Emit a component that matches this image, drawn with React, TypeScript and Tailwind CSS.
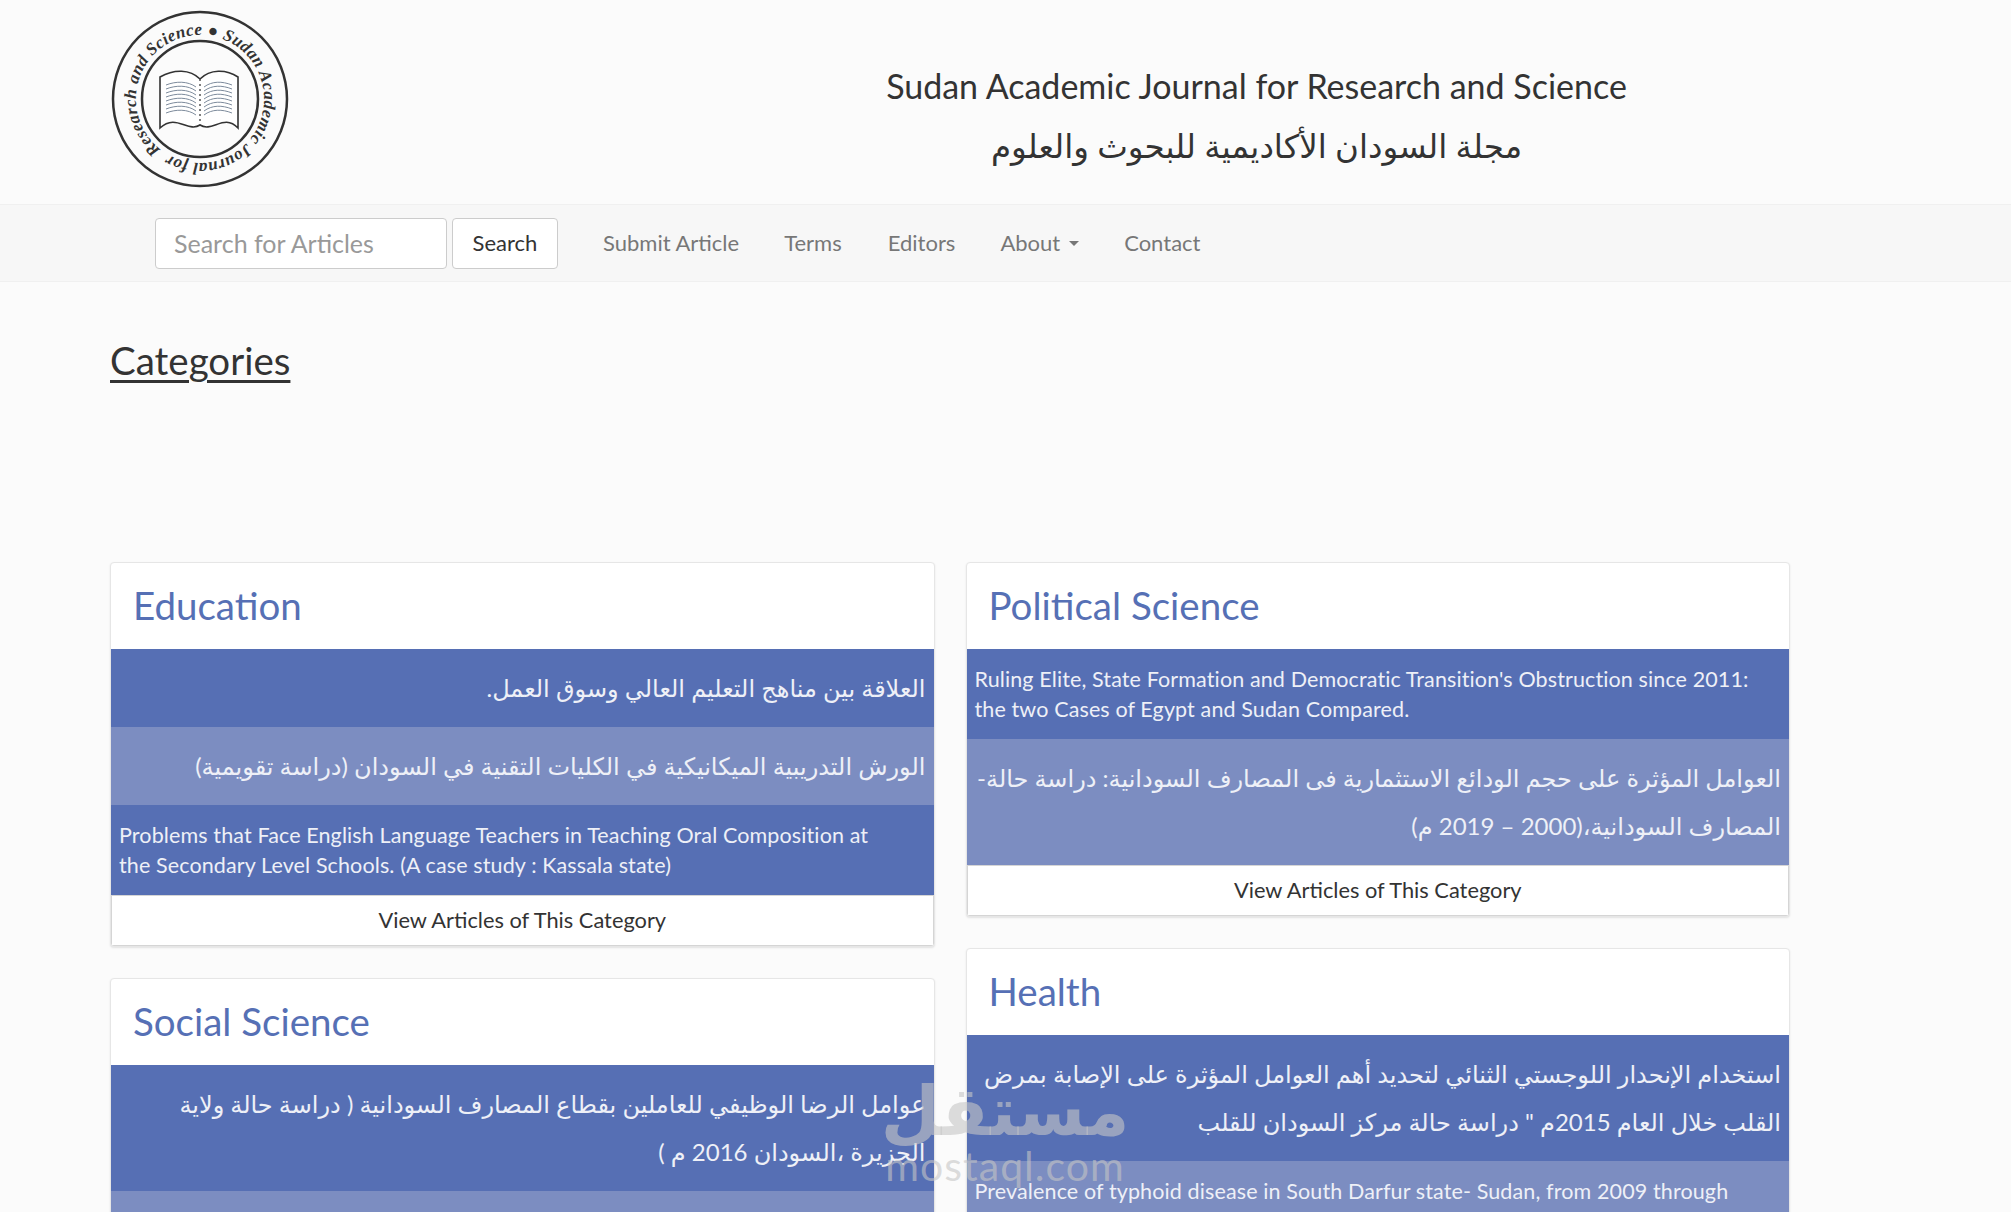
const font = "font-['Lato','DejaVu_Sans',sans-serif]";

type Item = { text: string; rtl?: boolean };
type Category = { title: string; items: Item[]; footer?: boolean };

const left: Category[] = [
  {
    title: 'Education',
    footer: true,
    items: [
      { text: 'العلاقة بين مناهج التعليم العالي وسوق العمل.', rtl: true },
      { text: 'الورش التدريبية الميكانيكية في الكليات التقنية في السودان (دراسة تقويمية)', rtl: true },
      { text: 'Problems that Face English Language Teachers in Teaching Oral Composition at the Secondary Level Schools. (A case study : Kassala state)' },
    ],
  },
  {
    title: 'Social Science',
    items: [
      { text: 'عوامل الرضا الوظيفي للعاملين بقطاع المصارف السودانية ( دراسة حالة ولاية الجزيرة ،السودان 2016 م )', rtl: true },
      { text: '\u00a0', rtl: true },
    ],
  },
];

const right: Category[] = [
  {
    title: 'Political Science',
    footer: true,
    items: [
      { text: "Ruling Elite, State Formation and Democratic Transition's Obstruction since 2011: the two Cases of Egypt and Sudan Compared." },
      { text: 'العوامل المؤثرة على حجم الودائع الاستثمارية فى المصارف السودانية: دراسة حالة- المصارف السودانية،(2000 – 2019 م)', rtl: true },
    ],
  },
  {
    title: 'Health',
    items: [
      { text: 'استخدام الإنحدار اللوجستي الثنائي لتحديد أهم العوامل المؤثرة على الإصابة بمرض القلب خلال العام 2015م " دراسة حالة مركز السودان للقلب', rtl: true },
      { text: 'Prevalence of typhoid disease in South Darfur state- Sudan, from 2009 through 2014' },
    ],
  },
];

function Logo() {
  return (
    <svg viewBox="0 0 180 180" className="w-[180px] h-[180px] shrink-0 mb-[6px]">
      <defs>
        <path id="ring" d="M90 90 m-64 0 a64 64 0 1 1 128 0 a64 64 0 1 1 -128 0" />
      </defs>
      <circle cx="90" cy="90" r="87" fill="none" stroke="#333" strokeWidth="2.5" />
      <circle cx="90" cy="90" r="58" fill="none" stroke="#333" strokeWidth="2.5" />
      <g transform="rotate(-52 90 90)">
        <text fontFamily="'Liberation Serif',serif" fontStyle="italic" fontWeight="700" fontSize="17" fill="#333">
          <textPath href="#ring" startOffset="0" textLength="392" lengthAdjust="spacing">Research and Science ● Sudan Academic Journal for</textPath>
        </text>
      </g>
      <path d="M50 68 C64 60 80 60 90 70 C100 60 116 60 128 68 L128 119 C114 104 102 124 90 116 C78 124 66 104 50 119 Z" fill="#fff" stroke="#333" strokeWidth="1.6" />
      <path d="M90 70 V116" stroke="#555" strokeWidth="1.5" strokeDasharray="2 3" />
      {[0, 1, 2, 3, 4, 5, 6, 7].map((i) => (
        <g key={i} fill="none" stroke="#7d8b9c" strokeWidth="1">
          <path d={`M56 ${76 + i * 4} C66 ${72 + i * 4} 78 ${72 + i * 4} 86 ${78 + i * 4}`} />
          <path d={`M94 ${78 + i * 4} C102 ${72 + i * 4} 112 ${72 + i * 4} 122 ${76 + i * 4}`} />
        </g>
      ))}
    </svg>
  );
}

function CategoryCard({ category }: { category: Category }) {
  return (
    <div className="bg-white border border-[#e6e6e6] rounded-[4px] shadow-[0_1px_2px_rgba(0,0,0,0.1)] overflow-hidden">
      <h3 className="h-[86px] px-[22px] flex items-center text-[38.5px] text-[#5670b5]">{category.title}</h3>
      {category.items.map((item, i) => (
        <div
          key={i}
          dir={item.rtl ? 'rtl' : 'ltr'}
          className={
            (i % 2 === 0 ? 'bg-[#566fb4] ' : 'bg-[#7c8dc1] ') +
            (item.rtl
              ? 'px-2 py-[15px] text-[24px] leading-[48px] text-[#eef0f7]'
              : 'pl-2 pr-[33px] py-[15px] text-[21.5px] leading-[30px] text-[#eef0f7] tracking-[0.12px]')
          }
        >
          {item.text}
        </div>
      ))}
      {category.footer && (
        <div className="h-[51px] flex items-center justify-center text-[21.8px] text-[#333] border border-[#d5d5d5] bg-white">
          View Articles of This Category
        </div>
      )}
    </div>
  );
}

export default function App() {
  return (
    <div className={`relative h-[1212px] overflow-hidden bg-[#fbfbfb] text-[#333] ${font}`}>
      <header className="h-[204px] pl-[110px] flex items-center">
        <Logo />
        <div className="flex-1 mt-[28px] pl-[308px] pr-[96px] text-center">
          <h1 className="text-[34px] leading-[60px] text-[#333]">Sudan Academic Journal for Research and Science</h1>
          <h2 dir="rtl" className="text-[32.5px] leading-[60px] text-[#333]">مجلة السودان الأكاديمية للبحوث والعلوم</h2>
        </div>
      </header>

      <nav className="h-[78px] bg-[#f7f7f7] border-y border-[#f0f0f0] pl-[155px] pb-[2px] flex items-center text-[22px] text-[#777]">
        <input
          placeholder="Search for Articles"
          className="w-[292px] h-[51px] px-[18px] mt-[2px] bg-white border border-[#ccc] rounded-[4px] text-[25px] placeholder:text-[#999] outline-none"
        />
        <button className="ml-[5px] mt-[2px] w-[106px] h-[51px] pb-[2px] bg-white border border-[#ccc] rounded-[4px] text-[22px] text-[#333]">Search</button>
        <a className="ml-[45px]">Submit Article</a>
        <a className="ml-[45px]">Terms</a>
        <a className="ml-[46px]">Editors</a>
        <a className="ml-[45px] flex items-center gap-[9px]">
          About
          <span className="mt-[2px] border-x-[5px] border-x-transparent border-t-[5px] border-t-[#777]" />
        </a>
        <a className="ml-[45px]">Contact</a>
      </nav>

      <main className="pl-[110px] pr-[221px]">
        <h2 className="mt-[53px] h-[227px] text-[38.5px] leading-[50px] text-[#333] underline decoration-[3px] underline-offset-[5px]">Categories</h2>
        <div className="grid grid-cols-2 gap-x-[31px] items-start">
          <div className="flex flex-col gap-[31px]">
            {left.map((c) => (
              <CategoryCard key={c.title} category={c} />
            ))}
          </div>
          <div className="flex flex-col gap-[31px]">
            {right.map((c) => (
              <CategoryCard key={c.title} category={c} />
            ))}
          </div>
        </div>
      </main>

      {/* mostaql watermark */}
      <div className="absolute left-[880px] top-[1071px] w-[250px] text-center text-[#c6c6c6]/60 pointer-events-none">
        <div dir="rtl" className="text-[68px] leading-[76px] font-bold">مستقل</div>
        <div className="text-[41px] leading-[38px] tracking-[1px]">mostaql.com</div>
      </div>
    </div>
  );
}
